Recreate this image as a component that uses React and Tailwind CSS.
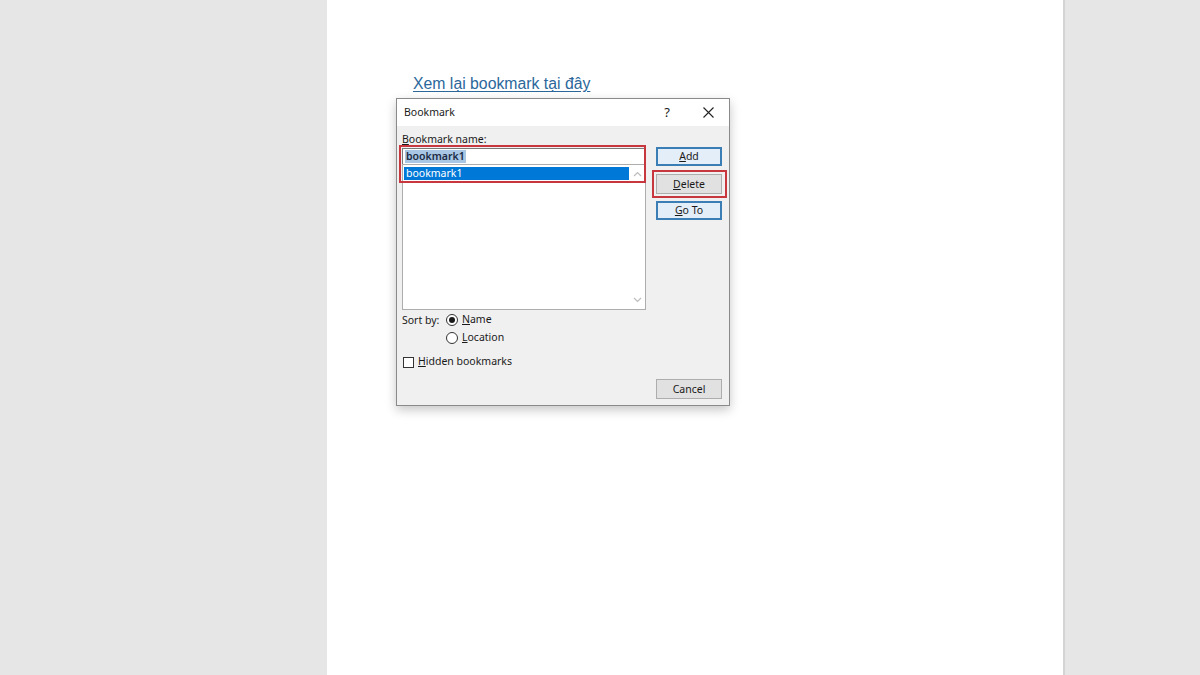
export default function App() {
  const ui = { fontFamily: '"Noto Sans", "Open Sans", sans-serif' }

  return (
    <div className="flex h-[675px] w-[1200px] overflow-hidden bg-[#e6e6e6]">
      {/* left margin */}
      <div className="w-[327px] shrink-0 bg-[#e6e6e6]" />

      {/* document page */}
      <div className="w-[736px] shrink-0 bg-white pt-[74px]">
        <a
          href="#"
          className="ml-[86px] block w-fit text-[15.8px] leading-[20px] text-[#2b679b] underline underline-offset-2"
          style={{ fontFamily: '"Liberation Sans", Arial, sans-serif' }}
        >
          Xem lại bookmark tại đây
        </a>

        {/* Bookmark dialog */}
        <div
          className="ml-[69px] mt-[4px] h-[308px] w-[334px] border border-[#8a8a8a] bg-[#f0f0f0] text-[10.5px] text-[#1a1a1a] shadow-[0_4px_10px_rgba(0,0,0,0.22)]"
          style={ui}
        >
          {/* title bar */}
          <div className="flex h-[27px] items-center bg-white pl-[7px]">
            <span className="flex-1 text-[10.5px]">Bookmark</span>
            <span className="w-[20px] text-center text-[13px] leading-none">?</span>
            <span className="ml-[24px] mr-[14px] flex w-[14px] items-center justify-center">
              <svg width="11" height="11" viewBox="0 0 11 11" fill="none" stroke="#222" strokeWidth="1.1">
                <path d="M0.5 0.5 L10.5 10.5 M10.5 0.5 L0.5 10.5" />
              </svg>
            </span>
          </div>

          <div className="flex pl-[5px]">
            {/* left column */}
            <div className="w-[244px]">
              <div className="h-[22px] pt-[6px] leading-[14px]">
                <span className="underline">B</span>ookmark name:
              </div>
              <div className="relative">
                <div className="flex h-[16px] items-center border border-[#7a7a7a] border-b-0 bg-white pl-[2px]">
                  <span className="bg-[#a9c6e4] px-px font-semibold leading-[13px] text-[#1b2b44]">bookmark1</span>
                </div>
                <div className="flex h-[146px] border border-[#adadad] bg-white">
                  <div className="flex-1 pl-[1px] pt-[2px]">
                    <div className="flex h-[13px] items-center bg-[#0078d7] pl-[2px] text-white">bookmark1</div>
                  </div>
                  <div className="flex w-[16px] flex-col items-center justify-between py-[6px]">
                    <svg width="9" height="6" viewBox="0 0 9 6" fill="none" stroke="#bdbdbd" strokeWidth="1.2">
                      <path d="M1 5 L4.5 1.5 L8 5" />
                    </svg>
                    <svg width="9" height="6" viewBox="0 0 9 6" fill="none" stroke="#bdbdbd" strokeWidth="1.2">
                      <path d="M1 1 L4.5 4.5 L8 1" />
                    </svg>
                  </div>
                </div>
                {/* annotation box */}
                <div className="pointer-events-none absolute left-[-3px] top-[-3px] h-[38px] w-[247px] border-2 border-[#c8373e]" />
              </div>
            </div>

            {/* right buttons */}
            <div className="ml-[10px] flex w-[66px] flex-col pt-[21px]">
              <button className="h-[19px] border-2 border-[#3b7db5] bg-[#e3eef8] text-[10.5px] leading-none">
                <span className="underline">A</span>dd
              </button>
              <div className="relative mt-[8px]">
                <button className="h-[20px] w-full border border-[#adadad] bg-[#e1e1e1] text-[10.5px] leading-none">
                  <span className="underline">D</span>elete
                </button>
                <div className="pointer-events-none absolute left-[-4px] top-[-4px] h-[28px] w-[75px] border-2 border-[#c8373e]" />
              </div>
              <button className="mt-[7px] h-[19px] border-2 border-[#3b7db5] bg-[#e3eef8] text-[10.5px] leading-none">
                <span className="underline">G</span>o To
              </button>
            </div>
          </div>

          {/* sort options */}
          <div className="flex pl-[5px] pt-[1px]">
            <span className="w-[44px] leading-[18px]">Sort by:</span>
            <div className="flex flex-col">
              <label className="flex h-[18px] items-center gap-[4px]">
                <span className="flex h-[12px] w-[12px] items-center justify-center rounded-full border border-[#333] bg-white">
                  <span className="h-[6px] w-[6px] rounded-full bg-[#1a1a1a]" />
                </span>
                <span><span className="underline">N</span>ame</span>
              </label>
              <label className="flex h-[18px] items-center gap-[4px]">
                <span className="h-[12px] w-[12px] rounded-full border border-[#333] bg-white" />
                <span><span className="underline">L</span>ocation</span>
              </label>
            </div>
          </div>

          <label className="mt-[6px] flex h-[18px] items-center gap-[4px] pl-[6px]">
            <span className="h-[11px] w-[11px] border border-[#333] bg-white" />
            <span><span className="underline">H</span>idden bookmarks</span>
          </label>

          <div className="flex justify-end pr-[7px] pt-[8px]">
            <button className="h-[20px] w-[66px] border border-[#adadad] bg-[#e1e1e1] text-[10.5px] leading-none">
              Cancel
            </button>
          </div>
        </div>
      </div>

      {/* right margin */}
      <div className="flex-1 border-l-2 border-[#d4d4d4] bg-[#e6e6e6]" />
    </div>
  )
}
